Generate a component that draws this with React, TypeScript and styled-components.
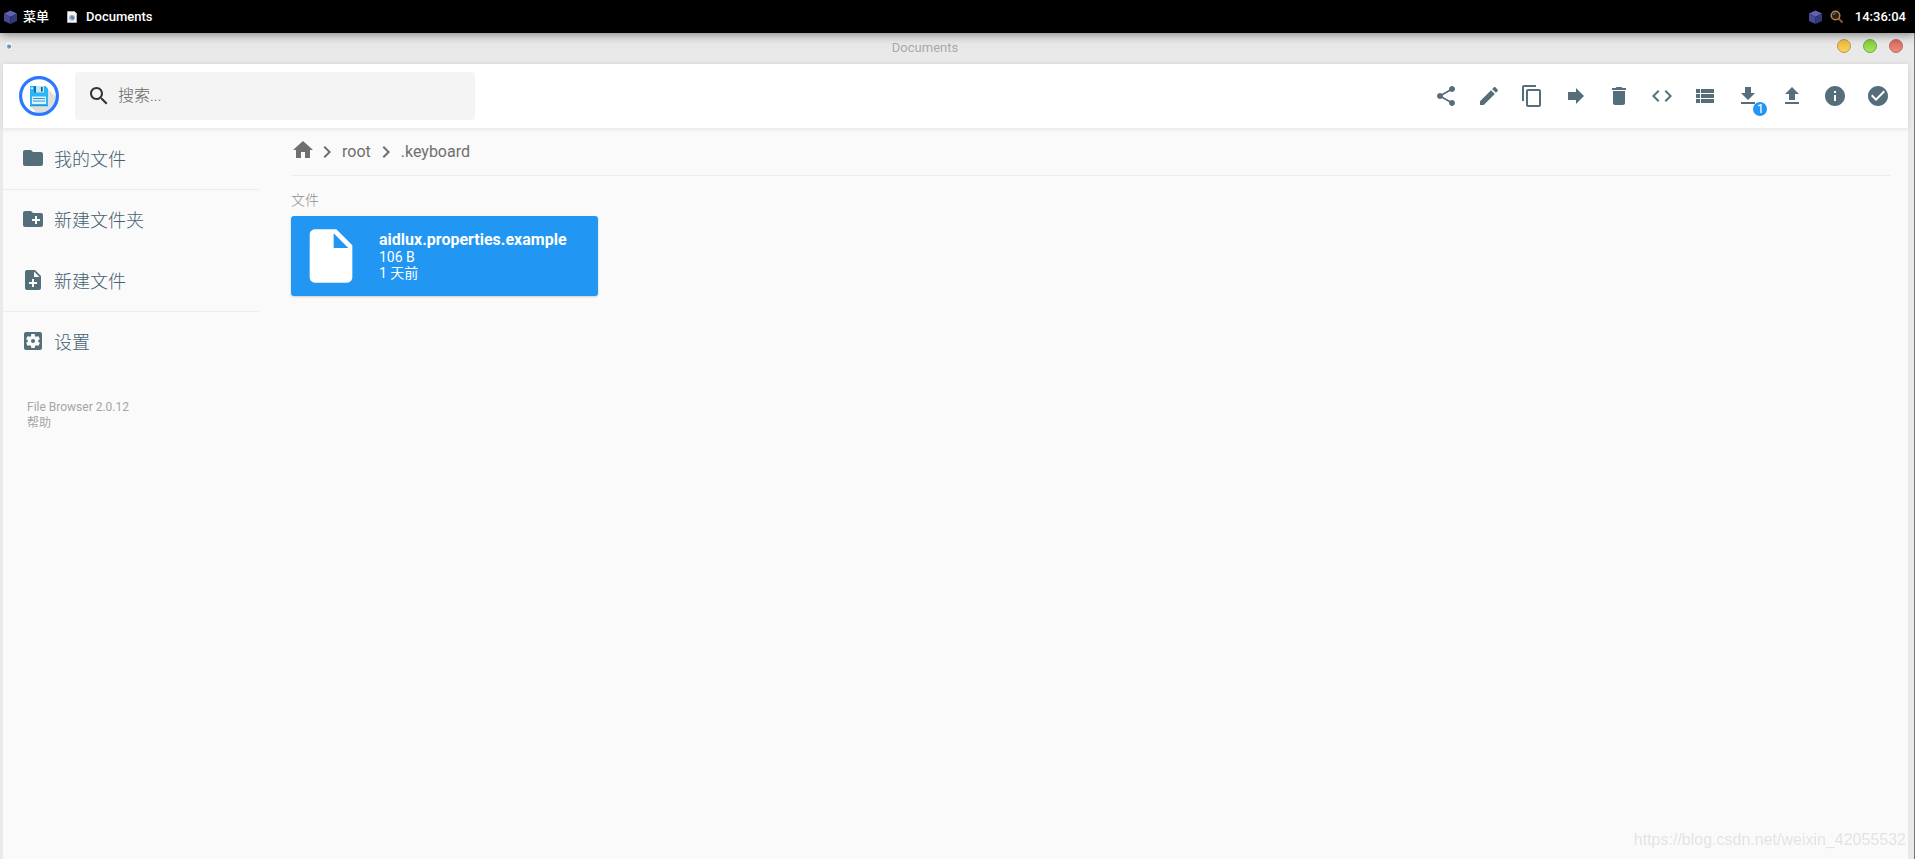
import React from 'react';
import styled, { createGlobalStyle } from 'styled-components';

const GlobalStyle = createGlobalStyle`
  *, *::before, *::after { box-sizing: border-box; }
  html, body { margin: 0; padding: 0; }
  body {
    background: #e9e9e9;
    color: #6f6f6f;
    font-family: Roboto, "Noto Sans CJK SC", sans-serif;
    font-size: 16px;
  }
  button, input { font-family: inherit; }
  button { border: 0; padding: 0; background: none; cursor: pointer; }
  a { color: inherit; text-decoration: none; }
  svg { display: block; flex: none; }
`;

const Desktop = styled.div`
  min-height: 100vh;
  display: flex;
  flex-direction: column;
`;

const Taskbar = styled.header`
  position: relative;
  z-index: 1;
  display: flex;
  align-items: center;
  justify-content: space-between;
  height: 33px;
  padding: 0 9px 0 4px;
  background: #000;
  color: #fff;
  box-shadow: 0 1px 10px rgba(0, 0, 0, 0.5);
`;

const TaskGroup = styled.div<{ $gap: number }>`
  display: flex;
  align-items: center;
  gap: ${(p) => p.$gap}px;
`;

const TaskButton = styled.button<{ $gap: number }>`
  display: flex;
  align-items: center;
  gap: ${(p) => p.$gap}px;
  color: #fff;
  font-size: 13px;
  font-weight: 500;
  line-height: 20px;
`;

const Clock = styled.time`
  margin-left: 4px;
  font-size: 13px;
  font-weight: 500;
  line-height: 20px;
`;

const Window = styled.section`
  flex: 1;
  display: flex;
  flex-direction: column;
  padding: 0 6px 0 3px;
  border-right: 1px solid #77777a;
`;

const TitleBar = styled.div`
  display: flex;
  align-items: center;
  height: 31px;
  padding: 0 5px 6px 2px;
`;

const WindowTitle = styled.h1`
  flex: 1;
  margin: 0;
  height: 12px;
  overflow: hidden;
  color: #a9a9a9;
  font-size: 13px;
  font-weight: 400;
  line-height: 16px;
  text-align: center;
`;

const WindowButtons = styled.div`
  display: flex;
  gap: 12px;
`;

const WindowButton = styled.button<{ $top: string; $bottom: string; $edge: string }>`
  width: 14px;
  height: 14px;
  border: 1px solid ${(p) => p.$edge};
  border-radius: 50%;
  background: linear-gradient(${(p) => p.$top}, ${(p) => p.$bottom});
`;

const AppHeader = styled.div`
  display: flex;
  align-items: center;
  height: 65px;
  padding: 0 12px 0 16px;
  background: #fff;
  border-bottom: 1px solid #ececec;
  box-shadow: 0 0 5px rgba(0, 0, 0, 0.1);
  position: relative;
`;

const SearchBox = styled.label`
  display: flex;
  align-items: center;
  width: 400px;
  height: 48px;
  margin: 0 auto 0 16px;
  padding: 0 12px;
  gap: 7px;
  border-radius: 4px;
  background: #f4f4f4;
  color: #333;
`;

const SearchInput = styled.input`
  flex: 1;
  min-width: 0;
  padding: 0 0 2px;
  border: 0;
  outline: 0;
  background: transparent;
  font-size: 16px;
  font-weight: 300;
  &::placeholder { color: #666; opacity: 1; }
`;

const Actions = styled.div`
  display: flex;
  justify-content: space-between;
  width: 468px;
`;

const ActionButton = styled.button`
  position: relative;
  display: flex;
  align-items: center;
  justify-content: center;
  width: 36px;
  height: 36px;
  border-radius: 50%;
  color: #546e7a;
`;

const Badge = styled.span`
  position: absolute;
  right: -1px;
  bottom: -2px;
  width: 14px;
  height: 14px;
  border-radius: 50%;
  background: #2196f3;
  color: #fff;
  font-size: 13px;
  line-height: 14px;
  text-align: center;
`;

const Body = styled.div`
  flex: 1;
  display: flex;
  background: #fafafa;
`;

const Sidebar = styled.nav`
  flex: none;
  width: 256px;
`;

const NavGroup = styled.div`
  display: flex;
  flex-direction: column;
  gap: 1px;
  & + & { border-top: 1px solid #ececec; }
`;

const NavButton = styled.button`
  display: flex;
  align-items: center;
  gap: 9px;
  height: 60px;
  padding: 0 18px 2px;
  color: #456070;
  font-size: 18px;
  font-weight: 300;
  svg { color: #546e7a; }
`;

const Credits = styled.div`
  display: flex;
  flex-direction: column;
  align-items: flex-start;
  margin: 27px 24px 0;
  color: #a5a5a5;
  font-size: 12px;
  line-height: 16px;
`;

const Main = styled.main`
  flex: 1;
  min-width: 0;
  padding: 0 18px 0 32px;
`;

const Breadcrumbs = styled.nav`
  display: flex;
  align-items: center;
  height: 47px;
  border-bottom: 1px solid #ececec;
  color: #6f6f6f;
`;

const Crumb = styled.a`
  padding: 0 3px;
  line-height: 24px;
`;

const HomeLink = styled.a`
  padding-bottom: 4px;
`;

const GroupTitle = styled.h2`
  margin: 16px 0 8px;
  color: #8f8f8f;
  font-size: 14px;
  font-weight: 300;
  line-height: 16px;
`;

const FileCard = styled.button`
  display: flex;
  align-items: center;
  gap: 16px;
  width: 307px;
  height: 80px;
  padding: 8px;
  border-radius: 3px;
  background: #2196f3;
  color: #fff;
  text-align: left;
  box-shadow: 0 1px 3px rgba(0, 0, 0, 0.06), 0 1px 2px rgba(0, 0, 0, 0.12);
`;

const FileInfo = styled.span`
  display: flex;
  flex-direction: column;
  font-size: 14px;
  line-height: 16px;
`;

const FileName = styled.strong`
  font-size: 16px;
  font-weight: 700;
  line-height: 18px;
`;

const Watermark = styled.span`
  position: fixed;
  right: 9px;
  bottom: 9px;
  color: #e3e3e3;
  font-family: "Liberation Sans", Arial, sans-serif;
  font-size: 16px;
  line-height: 20px;
`;

const paths = {
  search: 'M15.5 14h-.79l-.28-.27C15.41 12.59 16 11.11 16 9.5 16 5.91 13.09 3 9.5 3S3 5.91 3 9.5 5.91 16 9.5 16c1.61 0 3.09-.59 4.23-1.57l.27.28v.79l5 4.99L20.49 19l-4.99-5zm-6 0C7.01 14 5 11.99 5 9.5S7.01 5 9.5 5 14 7.01 14 9.5 11.99 14 9.5 14z',
  share: 'M18 16.08c-.76 0-1.44.3-1.96.77L8.91 12.7c.05-.23.09-.46.09-.7s-.04-.47-.09-.7l7.05-4.11c.54.5 1.25.81 2.04.81 1.66 0 3-1.34 3-3s-1.34-3-3-3-3 1.34-3 3c0 .24.04.47.09.7L8.04 9.81C7.5 9.31 6.79 9 6 9c-1.66 0-3 1.34-3 3s1.34 3 3 3c.79 0 1.5-.31 2.04-.81l7.12 4.16c-.05.21-.08.43-.08.65 0 1.61 1.31 2.92 2.92 2.92 1.61 0 2.92-1.31 2.92-2.92s-1.31-2.92-2.92-2.92z',
  edit: 'M3 17.25V21h3.75L17.81 9.94l-3.75-3.75L3 17.25zM20.71 7.04c.39-.39.39-1.02 0-1.41l-2.34-2.34c-.39-.39-1.02-.39-1.41 0l-1.83 1.83 3.75 3.75 1.83-1.83z',
  copy: 'M16 1H4c-1.1 0-2 .9-2 2v14h2V3h12V1zm3 4H8c-1.1 0-2 .9-2 2v14c0 1.1.9 2 2 2h11c1.1 0 2-.9 2-2V7c0-1.1-.9-2-2-2zm0 16H8V7h11v14z',
  forward: 'M12 8V4l8 8-8 8v-4H4V8z',
  trash: 'M6 19c0 1.1.9 2 2 2h8c1.1 0 2-.9 2-2V7H6v12zM19 4h-3.5l-1-1h-5l-1 1H5v2h14V4z',
  code: 'M9.4 16.6L4.8 12l4.6-4.6L8 6l-6 6 6 6 1.4-1.4zm5.2 0l4.6-4.6-4.6-4.6L16 6l6 6-6 6-1.4-1.4z',
  list: 'M3 14h4v-4H3v4zm0 5h4v-4H3v4zM3 9h4V5H3v4zm5 5h13v-4H8v4zm0 5h13v-4H8v4zM8 5v4h13V5H8z',
  download: 'M19 9h-4V3H9v6H5l7 7 7-7zM5 18v2h14v-2H5z',
  upload: 'M9 16h6v-6h4l-7-7-7 7h4zm-4 2h14v2H5z',
  info: 'M12 2C6.48 2 2 6.48 2 12s4.48 10 10 10 10-4.48 10-10S17.52 2 12 2zm1 15h-2v-6h2v6zm0-8h-2V7h2v2z',
  check: 'M12 2C6.48 2 2 6.48 2 12s4.48 10 10 10 10-4.48 10-10S17.52 2 12 2zm-2 15l-5-5 1.41-1.41L10 14.17l7.59-7.59L19 8l-9 9z',
  folder: 'M10 4H4c-1.1 0-1.99.9-1.99 2L2 18c0 1.1.9 2 2 2h16c1.1 0 2-.9 2-2V8c0-1.1-.9-2-2-2h-8l-2-2z',
  newFolder: 'M20 6h-8l-2-2H4c-1.11 0-1.99.89-1.99 2L2 18c0 1.11.89 2 2 2h16c1.11 0 2-.89 2-2V8c0-1.11-.89-2-2-2zm-1 8h-3v3h-2v-3h-3v-2h3V9h2v3h3v2z',
  newFile: 'M14 2H6c-1.1 0-1.99.9-1.99 2L4 20c0 1.1.89 2 1.99 2H18c1.1 0 2-.9 2-2V8l-6-6zm2 14h-3v3h-2v-3H8v-2h3v-3h2v3h3v2zm-3-7V3.5L18.5 9H13z',
  settings: 'M12 10c-1.1 0-2 .9-2 2s.9 2 2 2 2-.9 2-2-.9-2-2-2zm7-7H5c-1.11 0-2 .9-2 2v14c0 1.1.89 2 2 2h14c1.11 0 2-.9 2-2V5c0-1.1-.89-2-2-2zm-1.75 9c0 .23-.02.46-.05.68l1.48 1.16c.13.11.17.3.08.45l-1.4 2.42c-.09.15-.27.21-.43.15l-1.74-.7c-.36.28-.76.51-1.18.69l-.26 1.85c-.03.17-.18.3-.35.3h-2.8c-.17 0-.32-.13-.35-.29l-.26-1.85c-.43-.18-.82-.41-1.18-.69l-1.74.7c-.16.06-.34 0-.43-.15l-1.4-2.42c-.09-.15-.05-.34.08-.45l1.48-1.16c-.03-.23-.05-.46-.05-.69 0-.23.02-.46.05-.68l-1.48-1.16c-.13-.11-.17-.3-.08-.45l1.4-2.42c.09-.15.27-.21.43-.15l1.74.7c.36-.28.76-.51 1.18-.69l.26-1.85c.03-.17.18-.3.35-.3h2.8c.17 0 .32.13.35.29l.26 1.85c.43.18.82.41 1.18.69l1.74-.7c.16-.06.34 0 .43.15l1.4 2.42c.09.15.05.34-.08.45l-1.48 1.16c.03.23.05.46.05.69z',
  home: 'M10 20v-6h4v6h5v-8h3L12 3 2 12h3v8z',
  chevron: 'M10 6L8.59 7.41 13.17 12l-4.58 4.59L10 18l6-6z',
  file: 'M6 2c-1.1 0-1.99.9-1.99 2L4 20c0 1.1.89 2 1.99 2H18c1.1 0 2-.9 2-2V8l-6-6H6zm7 7V3.5L18.5 9H13z',
};

type IconName = keyof typeof paths;

const Icon = ({ name, size = 24 }: { name: IconName; size?: number }) => (
  <svg width={size} height={size} viewBox="0 0 24 24" fill="currentColor" aria-hidden="true">
    <path d={paths[name]} />
  </svg>
);

const Cube = () => (
  <svg width="13" height="14" viewBox="0 0 13 14" aria-hidden="true">
    <path d="M6.5 0.500 13 3.500 6.500 7 0 3.500z" fill="#6263b0" />
    <path d="M0 3.500 6.500 7v7L0 11z" fill="#454996" />
    <path d="M13 3.500 6.500 7v7L13 11z" fill="#303a7c" />
  </svg>
);

const PageIcon = ({ width, height }: { width: number; height: number }) => (
  <svg width={width} height={height} viewBox="0 0 10 12" aria-hidden="true">
    <path d="M0.500 0.500h7l2 2v9h-9z" fill="#f6f7f5" stroke="#d4d6d4" strokeWidth=".6" />
    <circle cx="5" cy="6.700" r="2.900" fill="#9db4d3" />
    <path d="M3 6.300 5 5l2.200 1-1 2.800z" fill="#5f7fae" />
  </svg>
);

const Magnifier = () => (
  <svg width="13" height="13" viewBox="0 0 13 13" aria-hidden="true">
    <path d="m8.500 8.500 3.500 3.500" stroke="#8b5a3c" strokeWidth="1.800" strokeLinecap="round" />
    <circle cx="5.500" cy="5.500" r="4.300" fill="#20242a" stroke="#c9803a" strokeWidth="1.500" />
    <path d="M3.500 5a2.200 2.200 0 0 1 2-1.700" stroke="#8a949c" fill="none" />
  </svg>
);

const Logo = () => (
  <svg width="40" height="40" viewBox="0 0 40 40" aria-hidden="true">
    <circle cx="20" cy="20" r="18.500" fill="#fff" />
    <path d="M29 13 37 21a17 17 0 0 1-20 15.500L11 30z" fill="#dedede" />
    <circle cx="20" cy="20" r="18.400" fill="none" stroke="#2979ff" strokeWidth="3.200" />
    <path d="M11 10h15.500L29 12.500V30H11z" fill="#29b6f6" />
    <path d="M11 29h18v1.200H11z" fill="#1a9bd8" />
    <circle cx="13" cy="12.300" r="1" fill="#fff" />
    <path d="M15 10h2v6.500h-2z" fill="#176fa0" />
    <path d="M17 10h8v6.500h-8z" fill="#bfe6fa" />
    <path d="M22 11h1.600v4.500H22z" fill="#1b5270" />
    <path d="M13 20.500h14V28H13z" fill="#e1f3fc" />
    <path d="M14 22.500h12M14 25h12" stroke="#1e88c8" strokeWidth=".9" />
  </svg>
);

const actions: { icon: IconName; label: string; count?: number }[] = [
  { icon: 'share', label: '分享' },
  { icon: 'edit', label: '重命名' },
  { icon: 'copy', label: '复制' },
  { icon: 'forward', label: '移动' },
  { icon: 'trash', label: '删除' },
  { icon: 'code', label: '终端' },
  { icon: 'list', label: '切换显示方式' },
  { icon: 'download', label: '下载', count: 1 },
  { icon: 'upload', label: '上传' },
  { icon: 'info', label: '信息' },
  { icon: 'check', label: '选择多个' },
];

const navigation: { icon: IconName; label: string }[][] = [
  [{ icon: 'folder', label: '我的文件' }],
  [
    { icon: 'newFolder', label: '新建文件夹' },
    { icon: 'newFile', label: '新建文件' },
  ],
  [{ icon: 'settings', label: '设置' }],
];

export default function App() {
  return (
    <Desktop>
      <GlobalStyle />
      <Taskbar>
        <TaskGroup $gap={18}>
          <TaskButton $gap={6}><Cube />菜单</TaskButton>
          <TaskButton $gap={9}><PageIcon width={10} height={12} />Documents</TaskButton>
        </TaskGroup>
        <TaskGroup $gap={8}>
          <Cube />
          <Magnifier />
          <Clock>14:36:04</Clock>
        </TaskGroup>
      </Taskbar>
      <Window>
        <TitleBar>
          <PageIcon width={8} height={10} />
          <WindowTitle>Documents</WindowTitle>
          <WindowButtons>
            <WindowButton aria-label="最小化" $top="#efb93c" $bottom="#fad25c" $edge="#b9984e" />
            <WindowButton aria-label="最大化" $top="#80cb35" $bottom="#a2e85a" $edge="#77a349" />
            <WindowButton aria-label="关闭" $top="#dc6659" $bottom="#f1897c" $edge="#b06c66" />
          </WindowButtons>
        </TitleBar>
        <AppHeader>
          <Logo />
          <SearchBox>
            <Icon name="search" />
            <SearchInput type="text" aria-label="搜索" placeholder="搜索..." />
          </SearchBox>
          <Actions>
            {actions.map((a) => (
              <ActionButton key={a.icon} aria-label={a.label}>
                <Icon name={a.icon} />
                {a.count && <Badge>{a.count}</Badge>}
              </ActionButton>
            ))}
          </Actions>
        </AppHeader>
        <Body>
          <Sidebar>
            {navigation.map((group) => (
              <NavGroup key={group[0].label}>
                {group.map((item) => (
                  <NavButton key={item.label}><Icon name={item.icon} />{item.label}</NavButton>
                ))}
              </NavGroup>
            ))}
            <Credits>
              <a href="#about">File Browser 2.0.12</a>
              <a href="#help">帮助</a>
            </Credits>
          </Sidebar>
          <Main>
            <Breadcrumbs>
              <HomeLink href="#home" aria-label="主页"><Icon name="home" /></HomeLink>
              <Icon name="chevron" />
              <Crumb href="#root">root</Crumb>
              <Icon name="chevron" />
              <Crumb href="#keyboard">.keyboard</Crumb>
            </Breadcrumbs>
            <GroupTitle>文件</GroupTitle>
            <FileCard>
              <Icon name="file" size={64} />
              <FileInfo>
                <FileName>aidlux.properties.example</FileName>
                <span>106 B</span>
                <span>1 天前</span>
              </FileInfo>
            </FileCard>
          </Main>
        </Body>
      </Window>
      <Watermark>https://blog.csdn.net/weixin_42055532</Watermark>
    </Desktop>
  );
}
